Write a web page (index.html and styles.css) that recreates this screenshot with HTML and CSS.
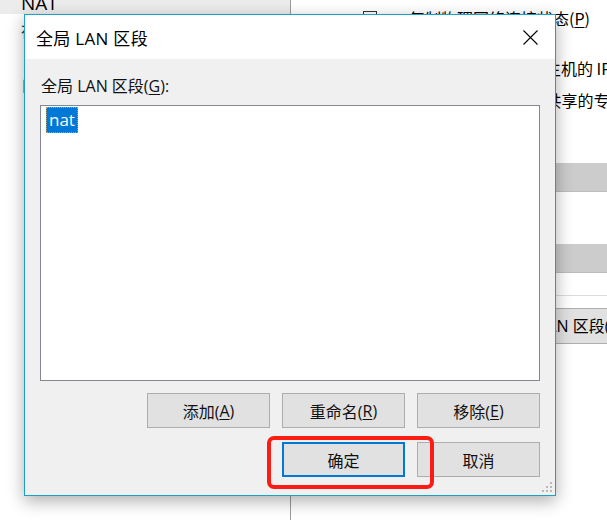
FILE: index.html
```html
<!DOCTYPE html>
<html lang="zh-CN">
<head>
<meta charset="utf-8">
<title>全局 LAN 区段</title>
<link rel="stylesheet" href="styles.css">
</head>
<body>
<div class="app">
  <aside class="left-pane">
    <div class="left-row selected"><span class="summary">NAT</span></div>
    <div class="left-row"><span class="summary">存在</span></div>
    <div class="left-row second"><span class="summary">自动检测</span></div>
  </aside>
  <main class="right-pane">
    <div class="opt check-row"><span class="checkbox"></span><span class="opt-text">复制物理网络连接状态(<u>P</u>)</span></div>
    <div class="opt radio-row row-nat"><span class="opt-text">NAT 模式(<u>N</u>): 用于共享主机的 IP 地址</span></div>
    <div class="opt radio-row row-host"><span class="opt-text">仅主机模式(<u>H</u>): 与主机共享的专用网络</span></div>
    <div class="combo"></div>
    <div class="combo combo-2"></div>
    <div class="separator"></div>
    <div class="bg-buttons"><span class="bg-button">LAN 区段(<u>S</u>)...</span></div>
  </main>
</div>

<div class="dialog">
  <div class="titlebar">
    <span class="title">全局 LAN 区段</span>
    <svg class="close" width="15" height="15" viewBox="0 0 15 15"><path d="M0.5 0.5 L14.5 14.5 M14.5 0.5 L0.5 14.5" stroke="#000" stroke-width="1.1" fill="none"/></svg>
  </div>
  <div class="dialog-body">
    <div class="label">全局 LAN 区段(<u>G</u>):</div>
    <div class="listbox">
      <span class="item selected-item">nat</span>
    </div>
    <div class="button-row">
      <span class="btn">添加(<u>A</u>)</span>
      <span class="btn">重命名(<u>R</u>)</span>
      <span class="btn">移除(<u>E</u>)</span>
    </div>
    <div class="button-row second-row">
      <span class="btn focused">确定</span>
      <span class="btn">取消</span>
    </div>
  </div>
  <svg class="grip" width="12" height="12" viewBox="0 0 12 12">
    <rect x="9" y="1" width="2" height="2" fill="#b9b9b9"/>
    <rect x="5" y="5" width="2" height="2" fill="#b9b9b9"/>
    <rect x="9" y="5" width="2" height="2" fill="#b9b9b9"/>
    <rect x="1" y="9" width="2" height="2" fill="#b9b9b9"/>
    <rect x="5" y="9" width="2" height="2" fill="#b9b9b9"/>
    <rect x="9" y="9" width="2" height="2" fill="#b9b9b9"/>
  </svg>
</div>

<div class="annotation"></div>
</body>
</html>
```

FILE: styles.css
```css
html, body {
  margin: 0;
  padding: 0;
}
body {
  width: 607px;
  height: 520px;
  overflow: hidden;
  background: #ffffff;
  font-family: "Open Sans", "Noto Sans CJK SC", sans-serif;
  color: #000;
  position: relative;
}
u { text-decoration: underline; text-underline-offset: 2px; }

.app {
  display: flex;
  height: 520px;
}

/* ---------- left pane (background window) ---------- */
.left-pane {
  width: 290px;
  flex: none;
  border-right: 1px solid #9c9c9c;
  background: #fff;
  display: flex;
  flex-direction: column;
}
.left-row {
  height: 22px;
  padding-left: 21px;
  font-family: "Noto Sans CJK SC", sans-serif;
  font-size: 16px;
  line-height: 22px;
  color: #333;
  overflow: hidden;
  white-space: nowrap;
}
.left-row.selected {
  height: 14px;
  background: #ececec;
  line-height: 14px;
  font-family: "Open Sans", sans-serif;
  font-size: 19px;
  color: #000;
  margin-bottom: 5px;
}
.left-row.selected .summary {
  display: inline-block;
  transform: translateY(-4px);
}
.left-row.second { margin-top: 32px; }

/* ---------- right pane (background window) ---------- */
.right-pane {
  flex: 1;
  overflow: hidden;
  background: #fff;
  font-family: "Noto Sans CJK SC", sans-serif;
  font-size: 16px;
  white-space: nowrap;
}
.opt {
  display: flex;
  align-items: center;
  height: 20px;
}
.check-row {
  margin-top: 8px;
  padding-left: 72px;
  gap: 10px;
}
.checkbox {
  width: 12px;
  height: 12px;
  border: 1px solid #333;
  background: #fff;
  flex: none;
}
.check-row .opt-text { margin-left: 22px; }
.row-nat { margin-top: 30px; padding-left: 94px; }
.row-host { margin-top: 12px; padding-left: 96px; }
.combo {
  margin-top: 53px;
  height: 28px;
  background: #cccccc;
  border-bottom: 1px solid #bcbcbc;
}
.combo-2 { margin-top: 52px; }
.separator {
  margin-top: 22px;
  height: 1px;
  background: #dcdcdc;
}
.bg-buttons {
  margin-top: 12px;
  display: flex;
  padding-left: 236px;
}
.bg-button {
  height: 34px;
  padding: 0 10px;
  line-height: 34px;
  background: #e1e1e1;
  border: 1px solid #adadad;
  border-right: none;
  font-family: "Open Sans", "Noto Sans CJK SC", sans-serif;
}

/* ---------- dialog ---------- */
.dialog {
  position: absolute;
  left: 24px;
  top: 14px;
  width: 530px;
  height: 480px;
  border: 1px solid #1aa1c6;
  background: #f0f0f0;
  box-shadow: 0 5px 16px rgba(0, 0, 0, 0.32);
  display: flex;
  flex-direction: column;
}
.titlebar {
  height: 44px;
  flex: none;
  background: #fff;
  display: flex;
  align-items: center;
  justify-content: space-between;
  padding: 0 17px 0 11px;
}
.title {
  font-size: 17px;
  letter-spacing: 0.3px;
}
.close { display: block; }

.dialog-body {
  padding: 16px 15px 0 15px;
  display: flex;
  flex-direction: column;
}
.label {
  font-size: 16px;
  line-height: 22px;
  padding-left: 1px;
  color: #111;
}
.listbox {
  margin-top: 8px;
  height: 276px;
  box-sizing: border-box;
  background: #fff;
  border: 1px solid #828790;
  padding: 1px 5px;
}
.item {
  display: inline-block;
  font-size: 17px;
  line-height: 24px;
  padding: 0 2px;
}
.selected-item {
  background: #0078d7;
  color: #fff;
  border: 1px dotted #e8902a;
}
.button-row {
  margin-top: 12px;
  display: flex;
  justify-content: flex-end;
  gap: 12px;
}
.second-row { margin-top: 14px; }
.btn {
  width: 121px;
  height: 33px;
  box-sizing: content-box;
  border: 1px solid #adadad;
  background: #e1e1e1;
  display: flex;
  align-items: center;
  justify-content: center;
  font-size: 16px;
  color: #111;
}
.btn.focused {
  width: 119px;
  height: 31px;
  border: 2px solid #0078d7;
}
.grip {
  position: absolute;
  right: 2px;
  bottom: 2px;
}

/* ---------- annotation ---------- */
.annotation {
  position: absolute;
  left: 267px;
  top: 436px;
  width: 159px;
  height: 45px;
  border: 4px solid #fb1c14;
  border-radius: 7px;
}
```
